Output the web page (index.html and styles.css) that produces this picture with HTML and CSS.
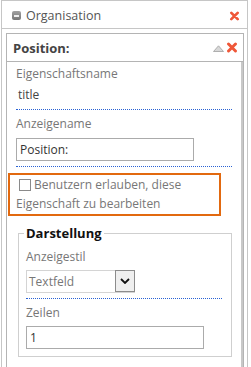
FILE: index.html
```html
<!DOCTYPE html>
<html lang="de">
<head>
    <meta charset="UTF-8">
    <meta name="viewport" content="width=device-width, initial-scale=1.0">
    <title>Organisation</title>
    <link rel="stylesheet" href="styles.css">
</head>
<body>
    <div class="window">
        <div class="window-title">
            <span class="collapse-icon"></span>
            <span class="window-name">Organisation</span>
            <svg class="close close-window" viewBox="0 0 12 12" width="11" height="10">
                <path d="M2.2 2.2 L9.8 9.8 M9.8 2.2 L2.2 9.8"/>
            </svg>
        </div>
        <div class="window-body">
            <div class="panel">
                <div class="panel-head">
                    <span class="panel-title">Position:</span>
                    <svg class="move-up" viewBox="0 0 11 7" width="11" height="7">
                        <path d="M0.5 6.5 L5.5 0.8 L10.5 6.5 Z"/>
                    </svg>
                    <svg class="close" viewBox="0 0 12 12" width="12" height="11">
                        <path d="M2.2 2.2 L9.8 9.8 M9.8 2.2 L2.2 9.8"/>
                    </svg>
                </div>
                <div class="panel-body">
                    <div class="field first">
                        <div class="label">Eigenschaftsname</div>
                        <div class="value">title</div>
                    </div>
                    <div class="field">
                        <div class="label">Anzeigename</div>
                        <input class="text-input" type="text" value="Position:">
                    </div>
                    <div class="highlight">
                        <span class="checkbox"></span>Benutzern erlauben, diese Eigenschaft zu bearbeiten
                    </div>
                    <fieldset class="group">
                        <legend>Darstellung</legend>
                        <div class="field">
                            <div class="label">Anzeigestil</div>
                            <div class="select">
                                <span class="select-text">Textfeld</span>
                                <span class="select-btn">
                                    <svg viewBox="0 0 10 6" width="10" height="6"><path d="M1 1 L5 5 L9 1"/></svg>
                                </span>
                            </div>
                        </div>
                        <div class="field last">
                            <div class="label">Zeilen</div>
                            <input class="text-input short" type="text" value="1">
                        </div>
                    </fieldset>
                </div>
            </div>
        </div>
    </div>
</body>
</html>
```

FILE: styles.css
```css
body {
    margin: 0;
    background: #fff;
    font-family: "Open Sans", "Liberation Sans", sans-serif;
    font-size: 12px;
    color: #444;
    overflow: hidden;
}
.window {
    margin-left: 1px;
    width: 247px;
    height: 367px;
    box-sizing: border-box;
    border: 1px solid #c6c6c6;
    border-bottom: none;
    overflow: hidden;
}
.window-title {
    display: flex;
    align-items: center;
    padding: 2px 0 0 10px;
    box-sizing: border-box;
    height: 28px;
    border-bottom: 1px solid #c6c6c6;
}
.collapse-icon {
    width: 9px;
    height: 9px;
    border-radius: 2px;
    background: linear-gradient(#a0a0a0, #777);
    position: relative;
    margin-right: 5px;
}
.collapse-icon::after {
    content: "";
    position: absolute;
    left: 2px;
    right: 2px;
    top: 4px;
    height: 2px;
    background: #eee;
}
.window-name {
    font-size: 12.5px;
    color: #555;
    flex: 1;
}
.close path {
    stroke: #ef5738;
    stroke-width: 3.2;
    stroke-linecap: round;
    fill: none;
}
.close-window {
    margin-right: 7px;
}
.window-body {
    padding: 4px 3px 0 4px;
}
.panel {
    width: 238px;
    box-sizing: border-box;
    border: 1px solid #b4b4b4;
}
.panel-head {
    display: flex;
    align-items: center;
    height: 27px;
    padding-left: 6px;
    border-bottom: 1px solid #b4b4b4;
}
.panel-title {
    flex: 1;
    font-weight: bold;
    font-size: 13px;
    color: #444;
}
.move-up {
    margin-right: 2px;
    margin-top: 2px;
}
.move-up path {
    fill: #d8d8d8;
    stroke: #a0a0a0;
    stroke-width: 0.8;
}
.panel-head .close {
    margin-right: 5px;
}
.panel-body {
    padding: 0 9px 0 9px;
    border-right: 2px solid #c8c8c8;
    border-bottom: 2px solid #c8c8c8;
}
.field {
    padding: 4px 0 5px;
    border-bottom: 1px dotted #2a62d4;
    line-height: 19px;
}
.field.first {
    padding-top: 2px;
}
.field.last {
    border-bottom: none;
    padding-bottom: 7px;
}
.label {
    color: #777;
}
.value {
    margin-top: 2px;
    padding-left: 2px;
    color: #444;
}
.text-input {
    display: block;
    margin-top: 5px;
    width: 178px;
    height: 23px;
    box-sizing: border-box;
    border: 1px solid #ababab;
    padding: 0 3px;
    font: inherit;
    color: #333;
    outline: none;
}
.text-input.short {
    margin-top: 4px;
    width: 178px;
}
.highlight {
    margin: 6px 11px 0 -8px;
    border: 2px solid #e2690f;
    padding: 0 0 1px 6px;
    line-height: 19px;
    color: #777;
}
.checkbox {
    display: inline-block;
    width: 12px;
    height: 12px;
    box-sizing: border-box;
    border: 1px solid #8a8a8a;
    margin: 0 3px 0 3px;
    vertical-align: -2px;
}
.group {
    margin: 8px 0 12px 2px;
    padding: 0 9px 0 7px;
    border: 1px solid #cfcfcf;
}
.group legend {
    font-weight: bold;
    font-size: 13px;
    color: #111;
    padding: 0 2px;
    margin-left: -2px;
    line-height: 19px;
}
.select {
    display: flex;
    margin-top: 4px;
    width: 109px;
    height: 23px;
    box-sizing: border-box;
    border: 1px solid #d4d4d4;
}
.select-text {
    flex: 1;
    padding-left: 2px;
    color: #777;
    line-height: 21px;
}
.select-btn {
    display: flex;
    align-items: center;
    justify-content: center;
    width: 20px;
    margin: -1px -1px 0 0;
    height: 22px;
    box-sizing: border-box;
    border: 1px solid #8c8c8c;
    background: #efefef;
}
.select-btn path {
    fill: none;
    stroke: #111;
    stroke-width: 1.8;
}
```
